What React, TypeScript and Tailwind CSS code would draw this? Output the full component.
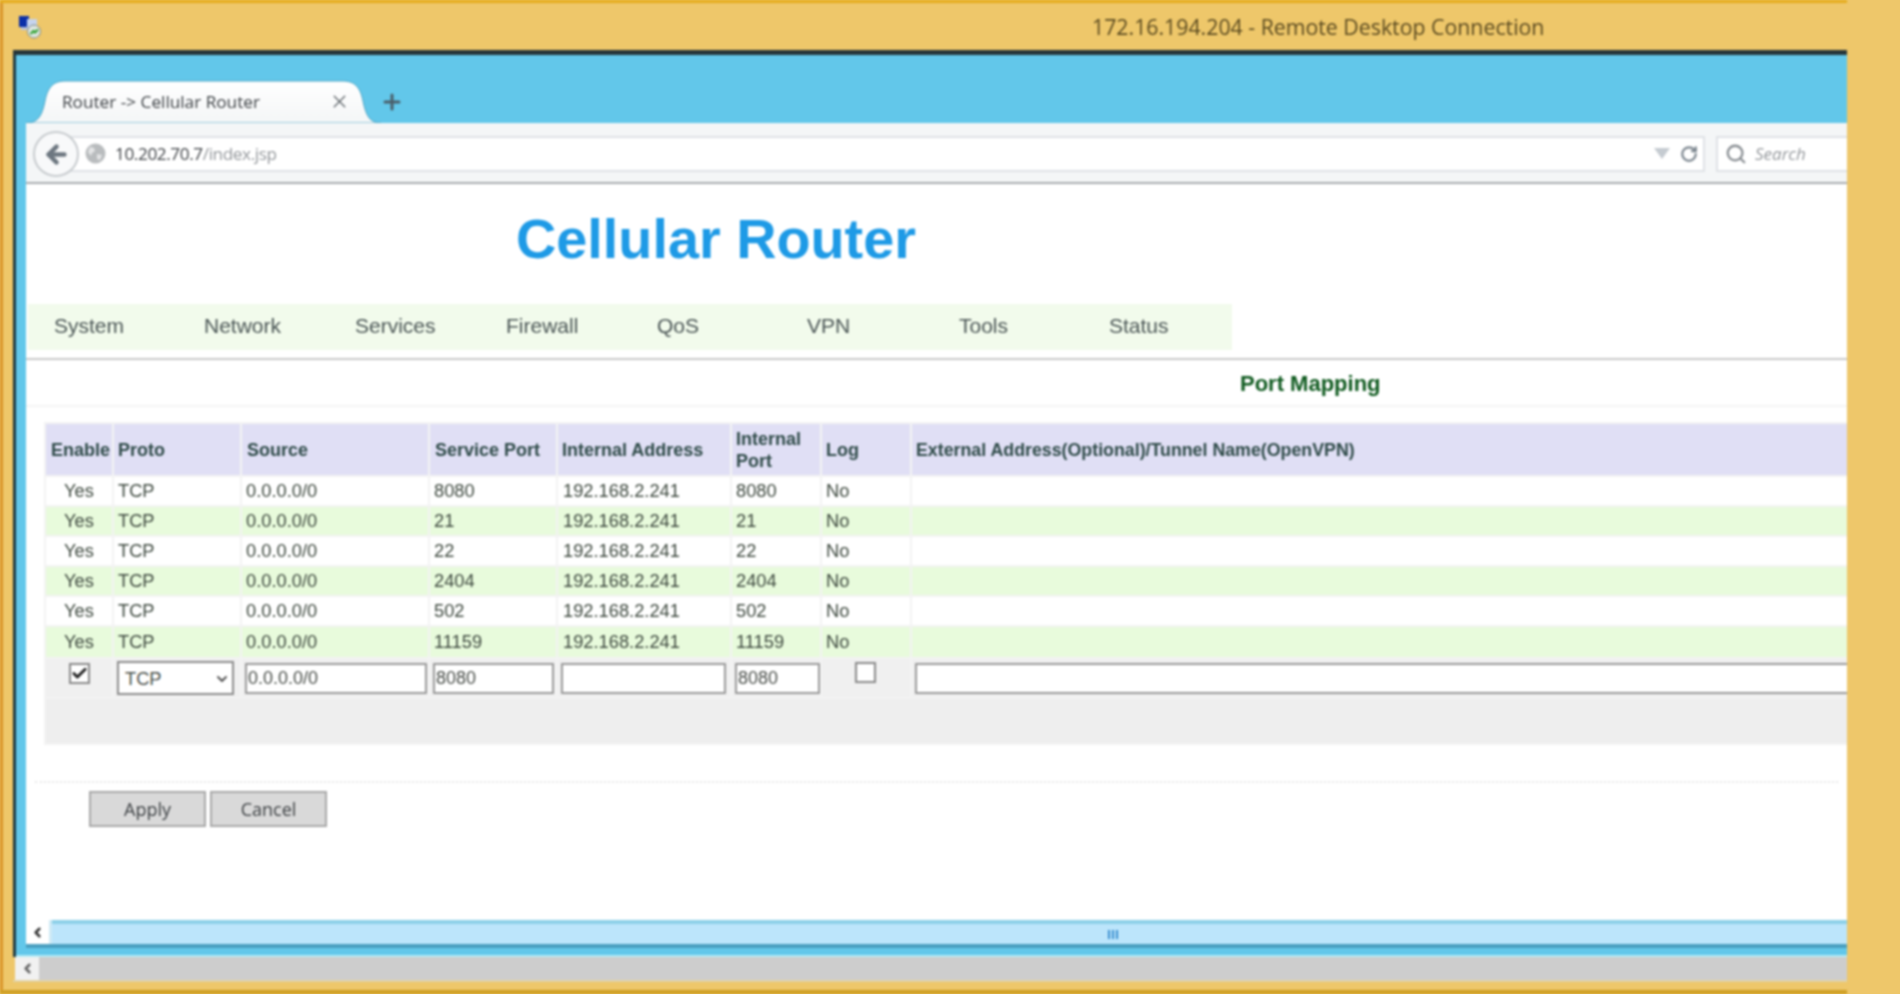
import React from "react";
import { ArrowLeft, RotateCw, Search, X, Plus, ChevronLeft, ChevronDown, Check } from "lucide-react";

const rows = [
  ["8080", "8080", false, "h-[28px]"],
  ["21", "21", true, "h-[28px]"],
  ["22", "22", false, "h-[28px]"],
  ["2404", "2404", true, "h-[28px]"],
  ["502", "502", false, "h-[28px]"],
  ["11159", "11159", true, "h-[30px]"],
] as const;

const nav = [
  ["System", "w-[150px]"],
  ["Network", "w-[151px]"],
  ["Services", "w-[151px]"],
  ["Firewall", "w-[151px]"],
  ["QoS", "w-[150px]"],
  ["VPN", "w-[152px]"],
  ["Tools", "w-[150px]"],
  ["Status", "w-[120px]"],
];

const th = "pl-[4px] text-left font-bold bg-[#e0dff5] align-middle";
const th5 = "pl-[5px] text-left font-bold bg-[#e0dff5] align-middle";

function Logo() {
  return (
    <svg width="24" height="26" viewBox="0 0 24 26">
      <rect x="1" y="2" width="10" height="11" fill="#0b2fa8" />
      <rect x="9" y="5" width="10" height="9" fill="#c6d4ee" />
      <rect x="3" y="13" width="12" height="3" fill="#b9c3d8" />
      <circle cx="16" cy="17.5" r="6.5" fill="#dfe7e2" stroke="#7d8a86" />
      <path d="M12.5 20l3-3 1.5 1.5 3-3" fill="none" stroke="#2fa12f" strokeWidth="2" />
    </svg>
  );
}

function Field({ value, className }: { value: string; className: string }) {
  return (
    <input
      readOnly
      value={value}
      className={`h-[31px] bg-white border-2 border-[#9a9a9a] pl-[1px] pt-[1px] text-[18px] text-[#4a4f4a] outline-none ${className}`}
    />
  );
}

function Box({ checked }: { checked?: boolean }) {
  return (
    <span className="inline-flex w-[21px] h-[21px] items-center justify-center bg-white border-2 border-[#8a8a8a]">
      {checked && <Check size={17} strokeWidth={4} className="text-[#222]" />}
    </span>
  );
}

export default function App() {
  return (
    <div className="w-[1900px] h-[994px] overflow-hidden bg-[#eec76a]">
      <div className="w-[1900px] h-[994px] flex flex-col blur-[0.8px] font-['Liberation_Sans',Arial,sans-serif]">
        <div className="h-[3px] w-[1847px] bg-[#e5ac1e] shrink-0" />
        <div className="flex-1 flex flex-col border-l-[3px] border-[#d9952a] min-h-0">
          <div className="h-[47px] shrink-0 flex items-center pl-[15px]">
            <Logo />
            <span className="ml-[1050px] text-[21.3px] text-[#5a4a20] font-['Open_Sans',sans-serif] whitespace-nowrap">
              172.16.194.204 - Remote Desktop Connection
            </span>
          </div>

          <div className="flex-1 flex flex-col pl-[10px] pr-[53px] min-h-0">
            <div className="h-[5px] bg-[#26363a] shrink-0" />
            <div className="h-[902px] shrink-0 flex flex-col bg-[#62c7ea] border-l-[3px] border-[#1f3a42] pl-[10px]">
              {/* tab strip */}
              <div className="h-[68px] shrink-0 flex items-end">
                <div className="relative w-[355px] h-[43px] flex items-center">
                  <svg className="absolute inset-0" width="355" height="43" viewBox="0 0 355 43">
                    <defs>
                      <linearGradient id="tabfill" x1="0" y1="0" x2="0" y2="1">
                        <stop offset="0" stopColor="#ffffff" />
                        <stop offset="1" stopColor="#f4f6f7" />
                      </linearGradient>
                    </defs>
                    <path
                      d="M0 43C12 43 16 36 19 21C22 6 28 1 40 1L316 1C328 1 334 6 337 21C340 36 344 43 355 43Z"
                      fill="url(#tabfill)"
                      stroke="#4fa6c6"
                    />
                  </svg>
                  <span className="relative ml-[36px] w-[292px] text-[17.2px] text-[#3e4246] font-['Open_Sans',sans-serif] whitespace-nowrap">
                    Router -&gt; Cellular Router
                  </span>
                  <X size={21} strokeWidth={1.5} className="relative -ml-[25px] text-[#5d6368]" />
                </div>
                <Plus size={24} strokeWidth={3} className="mb-[9px] -ml-[1px] text-[#4a5f6b]" />
              </div>

              {/* toolbar */}
              <div className="h-[61px] shrink-0 bg-[#f4f6f7] border-b-2 border-[#a9adb0] flex items-center relative gap-[11px] pt-[2px]">
                <div className="flex-1 ml-[30px] h-[36px] bg-white border-2 border-[#dfe2e6] flex items-center pl-[27px] pr-[5px]">
                  <svg width="21" height="21" viewBox="0 0 21 21" className="shrink-0">
                    <circle cx="10.5" cy="10.5" r="10" fill="#b9bcbe" />
                    <path d="M5 4l4 1 1 3-3 2-1 3-3-4zM12 11l5 1-2 5-3-1z" fill="#e4e5e6" />
                  </svg>
                  <span className="ml-[9px] text-[17.2px] text-[#3e4246] font-['Open_Sans',sans-serif] tracking-[-0.4px]">
                    10.202.70.7<span className="text-[#94989c]">/index.jsp</span>
                  </span>
                  <span className="ml-auto mr-[10px] w-0 h-0 border-x-[8px] border-x-transparent border-t-[11px] border-t-[#c5cbd1]" />
                  <RotateCw size={18} strokeWidth={3} className="text-[#7d8790]" />
                </div>
                <div className="w-[131px] h-[36px] bg-white border-2 border-r-0 border-[#dfe2e6] flex items-center pl-[7px] shrink-0">
                  <Search size={22} strokeWidth={2.5} className="text-[#8a8f94]" />
                  <span className="ml-[8px] text-[17px] italic text-[#94989c] font-['Open_Sans',sans-serif]">Search</span>
                </div>
                <div className="absolute left-[7px] top-[8px] w-[46px] h-[46px] rounded-full bg-[#f8f9fa] border-2 border-[#c8cccf] flex items-center justify-center">
                  <ArrowLeft size={27} strokeWidth={4} className="text-[#6d7780]" />
                </div>
              </div>

              {/* page */}
              <div className="flex-1 min-h-0 overflow-hidden bg-white flex flex-col">
                <div className="h-[120px] shrink-0 flex items-center pl-[490px] pb-[10px]">
                  <span className="text-[55.8px] font-bold text-[#1e9ae6] leading-none">Cellular Router</span>
                </div>
                <div className="h-[46px] w-[1204px] ml-[2px] shrink-0 bg-[#f2fbec] flex items-center pl-[26px] pb-[3px] text-[21px] text-[#4a5555]">
                  {nav.map(([label, w]) => (
                    <span key={label} className={w}>{label}</span>
                  ))}
                </div>
                <div className="mt-[8px] h-[2px] shrink-0 bg-[#c9c9c9]" />
                <div className="h-[47px] shrink-0 border-b-2 border-[#f4f4f4] flex items-center pl-[1214px] pt-[2px] text-[22px] font-bold text-[#0f5a1f]">
                  Port Mapping
                </div>

                <div className="mt-[15px] ml-[18px] shrink-0 w-[1850px]">
                  <table className="table-fixed w-[1830px] border-separate border-spacing-[2px] text-[18.3px] text-[#3f4a40] bg-[#f3f3f3]">
                    <colgroup>
                      <col className="w-[66px]" />
                      <col className="w-[126px]" />
                      <col className="w-[186px]" />
                      <col className="w-[126px]" />
                      <col className="w-[172px]" />
                      <col className="w-[88px]" />
                      <col className="w-[88px]" />
                      <col />
                    </colgroup>
                    <thead>
                      <tr className="h-[51px] text-[18px] text-[#2e4a48] leading-[22px]">
                        <th className={th5}>Enable</th>
                        <th className={th}>Proto</th>
                        <th className={th5}>Source</th>
                        <th className={th5}>Service Port</th>
                        <th className={th}>Internal Address</th>
                        <th className={th}>Internal Port</th>
                        <th className={th}>Log</th>
                        <th className={`${th} text-[17.8px]`}>External Address(Optional)/Tunnel Name(OpenVPN)</th>
                      </tr>
                    </thead>
                    <tbody>
                      {rows.map(([svc, int, green, h]) => {
                        const bg = green ? "bg-[#e8fbdc]" : "bg-white";
                        const td = `pl-[4px] ${bg}`;
                        return (
                          <tr key={svc} className={h}>
                            <td className={`${bg} text-center`}>Yes</td>
                            <td className={td}>TCP</td>
                            <td className={td}>0.0.0.0/0</td>
                            <td className={td}>{svc}</td>
                            <td className={`pl-[5px] ${bg}`}>192.168.2.241</td>
                            <td className={td}>{int}</td>
                            <td className={td}>No</td>
                            <td className={bg}></td>
                          </tr>
                        );
                      })}
                      <tr className="h-[38px] bg-[#f0f0f0]">
                        <td className="text-center pb-[5px]"><Box checked /></td>
                        <td className="pl-[3px]">
                          <div className="relative w-[117px] h-[34px] bg-white border-2 border-[#8c8c8c] flex items-center pl-[6px] pt-[1px] text-[#4a4f4a]">
                            TCP
                            <ChevronDown size={16} strokeWidth={3} className="absolute right-[2px] top-[8px] text-[#555]" />
                          </div>
                        </td>
                        <td className="pl-[3px]"><Field value="0.0.0.0/0" className="w-[182px]" /></td>
                        <td className="pl-[3px]"><Field value="8080" className="w-[121px]" /></td>
                        <td className="pl-[3px]"><Field value="" className="w-[165px]" /></td>
                        <td className="pl-[3px]"><Field value="8080" className="w-[85px]" /></td>
                        <td className="pl-[33px] pb-[3px]"><Box /></td>
                        <td className="pl-[3px]"><Field value="" className="w-[960px]" /></td>
                      </tr>
                      <tr className="h-[44px] bg-[#eeeeee]">
                        <td colSpan={8}></td>
                      </tr>
                    </tbody>
                  </table>
                </div>

                <div className="mt-[36px] mx-[9px] h-[2px] shrink-0 border-t-2 border-dotted border-[#e8e8e8]" />
                <div className="mt-[8px] ml-[63px] flex gap-[4px] shrink-0 text-[18px] text-[#3c4043] font-['Open_Sans',sans-serif]">
                  <button className="w-[117px] h-[36px] bg-[#d9d9d9] border-2 border-[#a8a8a8]">Apply</button>
                  <button className="w-[117px] h-[36px] bg-[#d9d9d9] border-2 border-[#a8a8a8]">Cancel</button>
                </div>
              </div>

              {/* inner scrollbar */}
              <div className="h-[28px] shrink-0 flex bg-[#cfeaf5] border-b-4 border-[#4a9fc0]">
                <div className="w-[23px] bg-white flex items-center justify-center shrink-0 mr-[3px]">
                  <ChevronLeft size={15} strokeWidth={4} className="text-[#333]" />
                </div>
                <div className="flex-1 bg-[#bce5fb] border-t-4 border-[#8dd0e8] flex items-center pl-[1056px] gap-[2px]">
                  <span className="w-[2px] h-[9px] bg-[#3a8fd0]" />
                  <span className="w-[2px] h-[9px] bg-[#3a8fd0]" />
                  <span className="w-[2px] h-[9px] bg-[#3a8fd0]" />
                </div>
              </div>
              <div className="h-[9px] shrink-0 border-b-2 border-[#b5eaf5] -ml-[10px]" />
            </div>

            {/* outer scrollbar */}
            <div className="h-[23px] shrink-0 flex bg-[#cdcdcd] ml-[2px]">
              <div className="w-[24px] bg-[#f1f1f1] flex items-center justify-center">
                <ChevronLeft size={15} strokeWidth={4} className="text-[#666]" />
              </div>
            </div>
            <div className="h-[2px] shrink-0 bg-[#e2d3a6]" />
          </div>
        </div>
        <div className="h-[4px] w-[1847px] shrink-0 bg-[#cf9f25]" />
      </div>
    </div>
  );
}
